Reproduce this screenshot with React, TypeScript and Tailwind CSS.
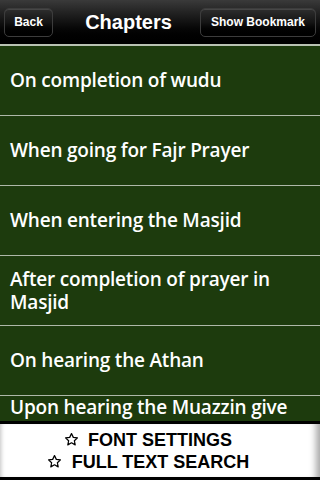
const CHAPTERS = [
  'On completion of wudu',
  'When going for Fajr Prayer',
  'When entering the Masjid',
  'After completion of prayer in Masjid',
  'On hearing the Athan',
  'Upon hearing the Muazzin give the Shahadah in the Athan, the call to prayer',
]

function Star() {
  return (
    <svg width="15" height="15" viewBox="0 0 24 24" className="shrink-0">
      <path
        d="M12 2.5l2.9 6.1 6.6.8-4.9 4.6 1.3 6.6L12 17.3l-5.9 3.3 1.3-6.6-4.9-4.6 6.6-.8z"
        fill="white"
        stroke="black"
        strokeWidth="2"
        strokeLinejoin="round"
      />
    </svg>
  )
}

function NavButton({ label, className }: { label: string; className?: string }) {
  return (
    <button
      className={`h-[29px] rounded-[5px] border border-[#3c3c3c] bg-gradient-to-b from-[#2e2e2e] via-[#141414] to-black text-white text-[12px] font-bold shadow-[inset_0_1px_0_rgba(255,255,255,0.12)] ${className ?? ''}`}
    >
      {label}
    </button>
  )
}

export default function App() {
  return (
    <div className="w-[320px] h-[480px] flex flex-col bg-black overflow-hidden" style={{ fontFamily: '"Liberation Sans", Arial, sans-serif' }}>
      {/* Barra superior */}
      <div className="h-[44px] shrink-0 bg-gradient-to-b from-[#3a3a3a] via-[#121212] via-50% to-black flex items-center px-[4px]">
        <NavButton label="Back" className="w-[49px]" />
        <h1 className="flex-1 text-center text-white text-[20px] font-bold pl-[4px]">Chapters</h1>
        <NavButton label="Show Bookmark" className="w-[116px]" />
      </div>
      <div className="h-[2px] shrink-0 bg-[#b9c2b3]" />

      {/* Lista */}
      <div className="flex-1 overflow-hidden bg-[#1d3b0d]">
        {CHAPTERS.map(c => (
          <div key={c} className="h-[70px] border-b border-[#aeb8a8] flex items-center px-[10px] overflow-hidden">
            <p
              className="text-white text-[19px] leading-[23px] font-semibold tracking-[-0.2px]"
              style={{ fontFamily: '"Open Sans", "DejaVu Sans", sans-serif' }}
            >
              {c}
            </p>
          </div>
        ))}
      </div>

      {/* Pie */}
      <div className="h-[59px] shrink-0 border-y-[3px] border-black bg-white shadow-[inset_-9px_0_7px_-5px_rgba(0,0,0,0.35),inset_5px_0_4px_-4px_rgba(0,0,0,0.25)] flex flex-col justify-center pr-[24px]">
        <div className="flex items-center justify-center gap-[9px] h-[22px]">
          <Star />
          <span className="text-black text-[18px] font-bold leading-none">FONT SETTINGS</span>
        </div>
        <div className="flex items-center justify-center gap-[10px] h-[22px]">
          <Star />
          <span className="text-black text-[18px] font-bold leading-none">FULL TEXT SEARCH</span>
        </div>
      </div>
    </div>
  )
}
